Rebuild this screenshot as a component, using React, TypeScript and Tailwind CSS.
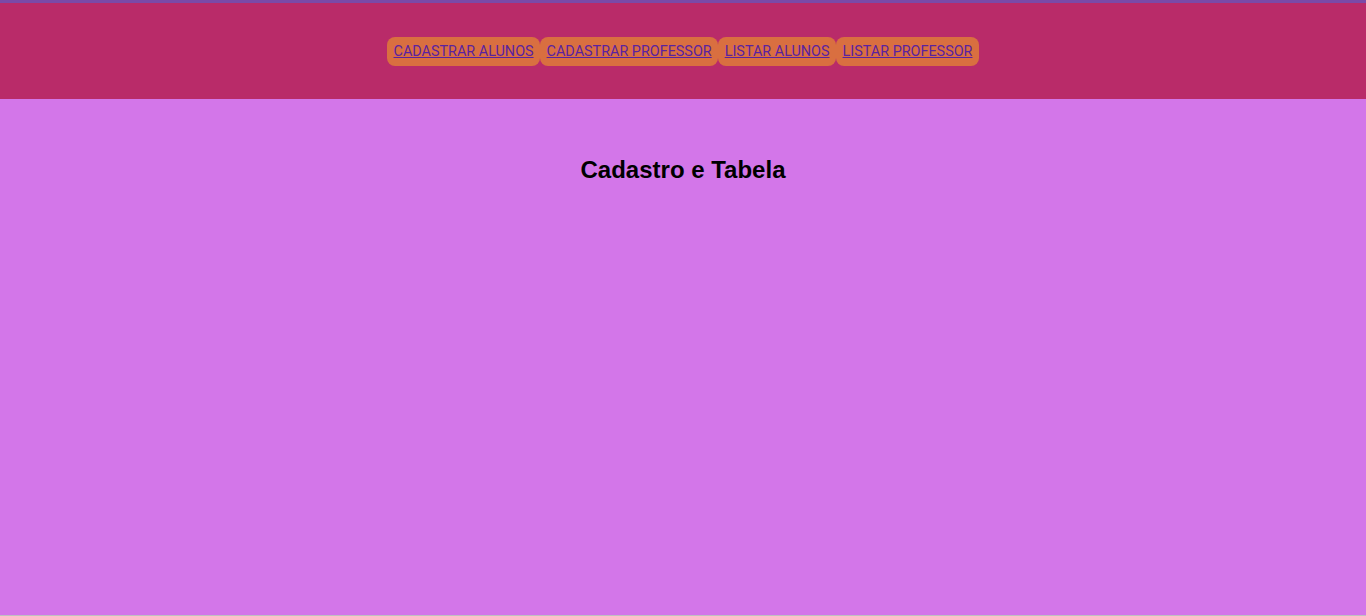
import React from "react";

const links = ["CADASTRAR ALUNOS", "CADASTRAR PROFESSOR", "LISTAR ALUNOS", "LISTAR PROFESSOR"];

export default function App() {
  return (
    <div className="w-[1366px] h-[616px] flex flex-col bg-[#d376e9] overflow-hidden">
      <div className="h-[3px] bg-[#7a4aa8]" />
      <header className="h-[96px] bg-[#b92b69] flex justify-center items-start pt-[34px]">
        <nav className="flex">
          {links.map((l) => (
            <a
              key={l}
              href="#"
              className="h-[29px] px-[6.5px] flex items-center rounded-[8px] bg-[#d96f40] text-[#5a22a0] underline text-[14.4px] font-['Roboto',sans-serif]"
            >
              {l}
            </a>
          ))}
        </nav>
      </header>
      <main className="flex-1 flex flex-col items-center">
        <h1 className="mt-[57px] text-[24px] leading-[28px] font-bold text-black font-['Liberation_Sans',Arial,sans-serif]">
          Cadastro e Tabela
        </h1>
      </main>
      <div className="h-[1px] bg-[#c0c0c0]" />
    </div>
  );
}
